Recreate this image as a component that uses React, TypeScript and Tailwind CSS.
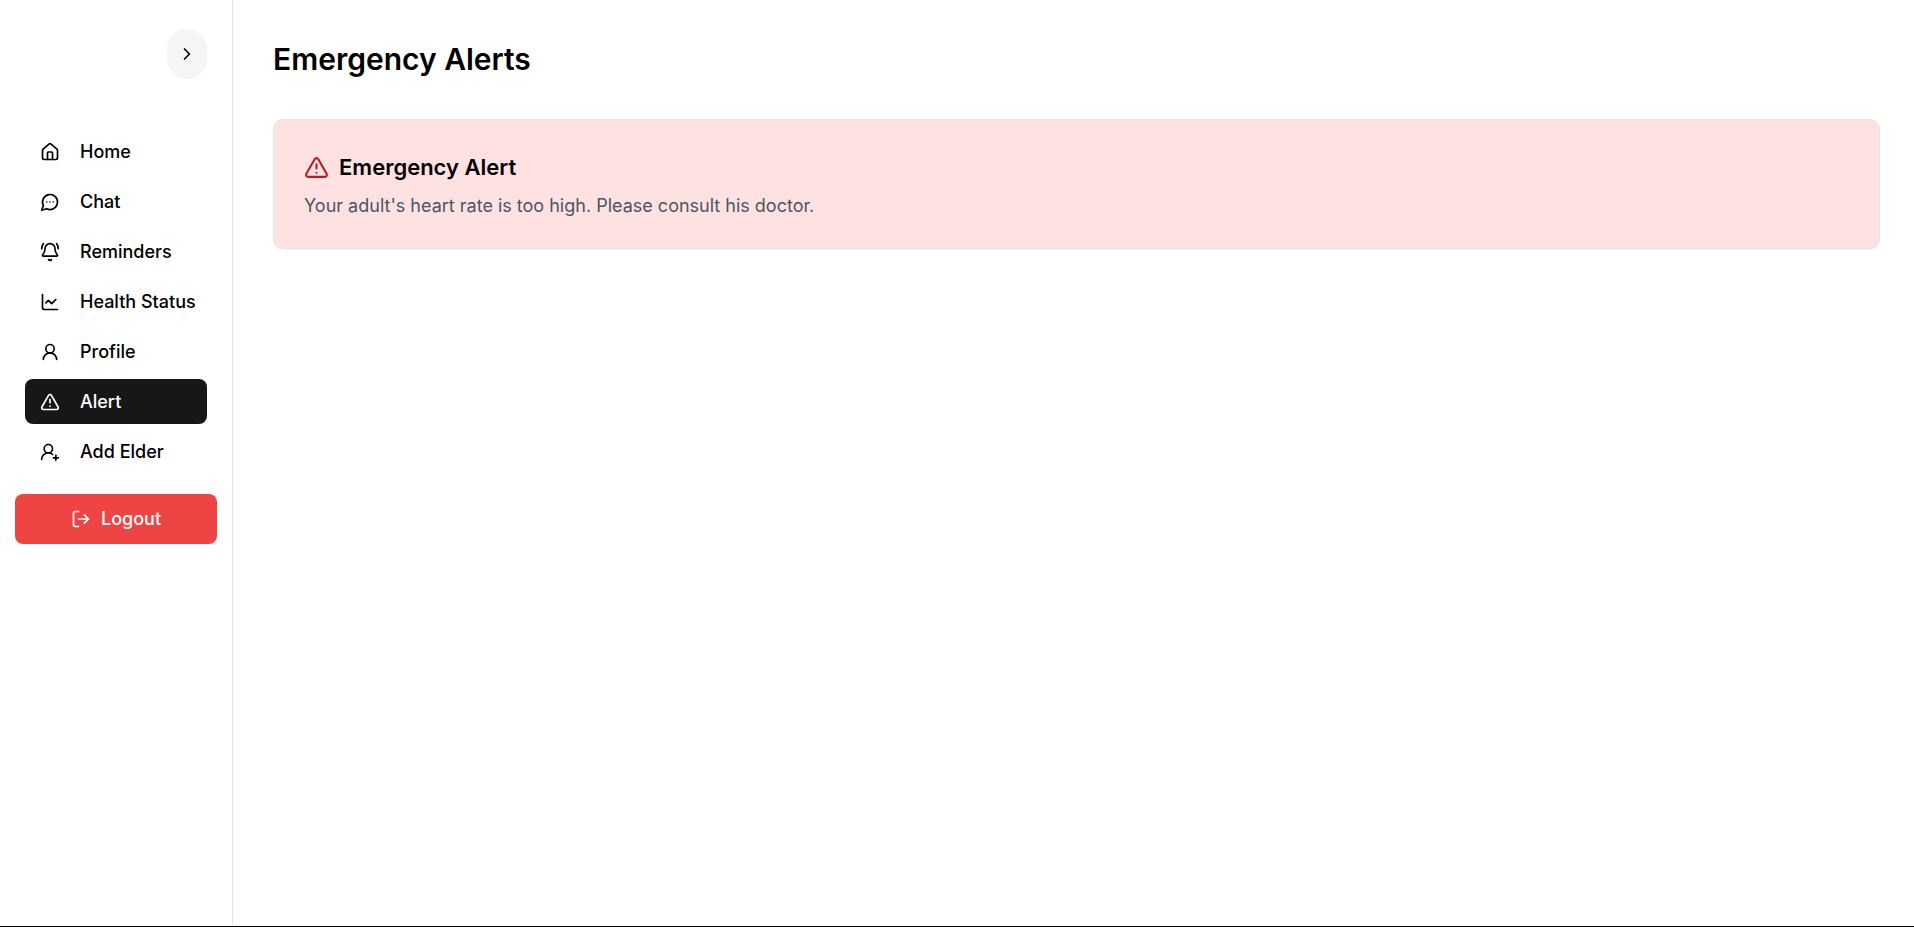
import React from "react";
import {
  BellRing,
  ChartLine,
  ChevronRight,
  House,
  LogOut,
  TriangleAlert,
  UserRound,
  UserRoundPlus,
} from "lucide-react";

type IconProps = { size?: number; className?: string };
type NavItem = { label: string; icon: React.ComponentType<IconProps>; active?: boolean };

function ChatBubble({ size = 24, className }: IconProps) {
  return (
    <svg
      width={size}
      height={size}
      viewBox="0 0 24 24"
      fill="none"
      stroke="currentColor"
      strokeWidth="2"
      strokeLinecap="round"
      strokeLinejoin="round"
      className={className}
      aria-hidden="true"
    >
      <path d="M7.9 20A9 9 0 1 0 4 16.1L2 22Z" />
      <path d="M8 12h.01" />
      <path d="M12 12h.01" />
      <path d="M16 12h.01" />
    </svg>
  );
}

const items: NavItem[] = [
  { label: "Home", icon: House },
  { label: "Chat", icon: ChatBubble },
  { label: "Reminders", icon: BellRing },
  { label: "Health Status", icon: ChartLine },
  { label: "Profile", icon: UserRound },
  { label: "Alert", icon: TriangleAlert, active: true },
  { label: "Add Elder", icon: UserRoundPlus },
];

function Sidebar() {
  return (
    <aside className="flex w-[233px] shrink-0 flex-col border-r border-[#e5e5e5] px-[15px] pt-[29px]">
      <button
        type="button"
        aria-label="Toggle sidebar"
        className="mr-[10px] flex h-[50px] w-10 items-center justify-center self-end rounded-full bg-[#f5f5f5]"
      >
        <ChevronRight size={20} />
      </button>
      <nav className="mt-[50px] flex flex-col gap-[5px] px-[10px]">
        {items.map(({ label, icon: Icon, active }) => (
          <a
            key={label}
            href="#"
            aria-current={active ? "page" : undefined}
            className={`flex h-[45px] items-center gap-5 whitespace-nowrap rounded-lg pl-[15px] text-lg/6 font-medium ${active ? "bg-[#171717] text-white" : "text-black"}`}
          >
            <Icon size={20} className="shrink-0" />
            {label}
          </a>
        ))}
      </nav>
      <button
        type="button"
        className="mt-5 flex h-[50px] items-center justify-center gap-[10px] rounded-lg bg-[#ef4444] text-lg/6 font-medium text-white"
      >
        <LogOut size={20} />
        Logout
      </button>
    </aside>
  );
}

export default function App() {
  return (
    <div className="flex min-h-screen border-b border-black bg-white font-['Inter',sans-serif] text-black">
      <Sidebar />
      <main className="min-w-0 flex-1 pt-10 pr-[34px] pl-10">
        <h1 className="text-[30px]/[38px] font-semibold">Emergency Alerts</h1>
        <section className="mt-[41px] rounded-[10px] border border-[#e5e7eb] bg-[#fee2e2] p-[30px] shadow-xs">
          <div className="flex items-center gap-[10px]">
            <TriangleAlert size={25} className="shrink-0 text-[#b91c1c]" />
            <h2 className="text-[22px]/[35px] font-semibold">Emergency Alert</h2>
          </div>
          <p className="mt-2 text-lg/[25px] text-[#4b5563]">
            Your adult's heart rate is too high. Please consult his doctor.
          </p>
        </section>
      </main>
    </div>
  );
}
